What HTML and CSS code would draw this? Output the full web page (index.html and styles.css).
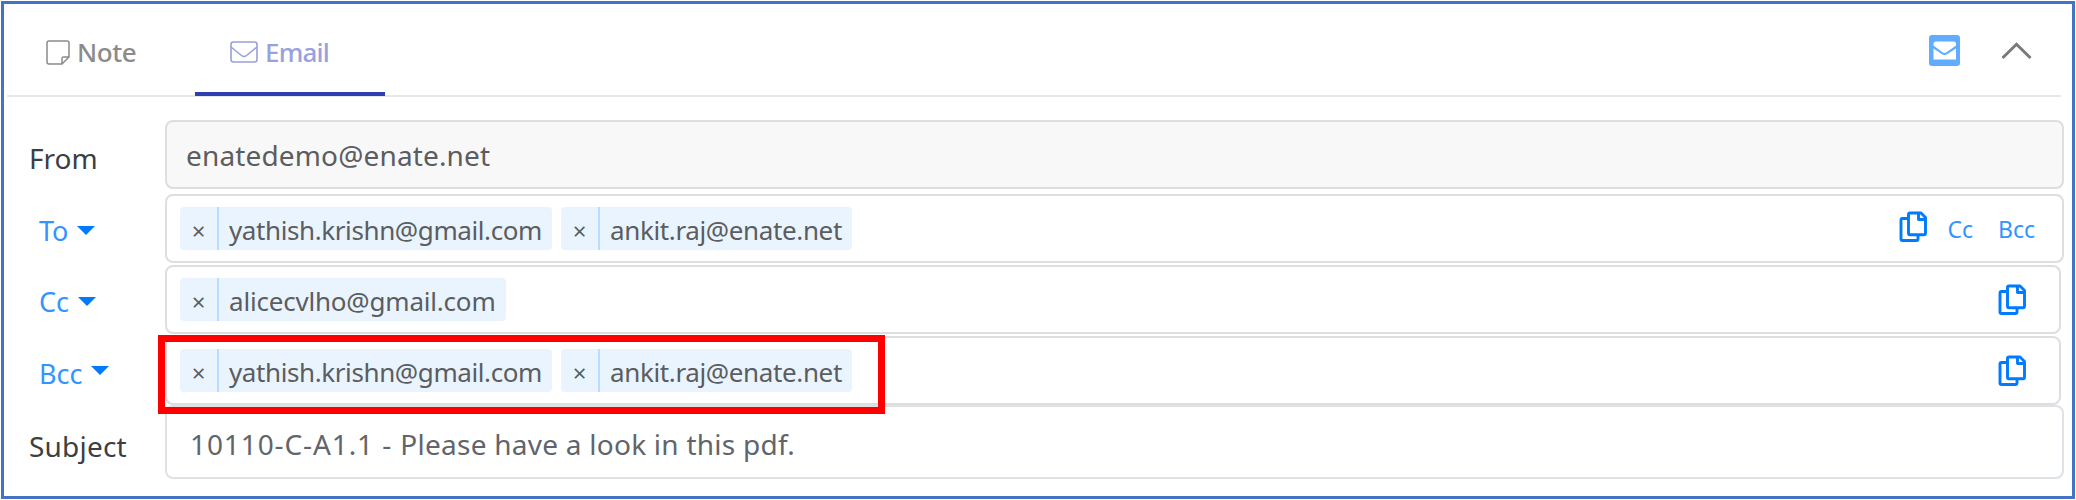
FILE: index.html
```html
<!DOCTYPE html>
<html lang="en">
<head>
<meta charset="utf-8">
<title>Email</title>
<link rel="stylesheet" href="styles.css">
</head>
<body>
<svg width="0" height="0" class="defs">
  <symbol id="copy" viewBox="0 0 28 32">
    <path d="M9 7.500H3.500Q2 7.500 2 9V28Q2 29.500 3.500 29.500H17.500Q19 29.500 19 28V24.500M11 2H22L26.500 6.500V22Q26.500 23.800 25 23.800H11Q9.500 23.800 9.500 22V3.500Q9.500 2 11 2ZM19.500 2V8.500H26.500" fill="none" stroke="currentColor" stroke-width="2.900" stroke-linejoin="round"/>
  </symbol>
</svg>
<main class="panel">
  <header class="tabs">
    <div class="tab note">
      <svg width="24" height="25" viewBox="0 0 24 25"><path d="M3 1H21Q23 1 23 3V17L16 24H3Q1 24 1 22V3Q1 1 3 1ZM23 17H17.500Q16 17 16 18.500V24" fill="none" stroke="currentColor" stroke-width="1.500"/></svg>
      <span>Note</span>
    </div>
    <div class="tab email">
      <svg width="28" height="22" viewBox="0 0 28 22"><rect x="1" y="1" width="26" height="20" rx="2.500" fill="none" stroke="currentColor" stroke-width="1.600"/><path d="M1 6L11.500 14.500Q14 16.500 16.500 14.500L27 6" fill="none" stroke="currentColor" stroke-width="1.600"/></svg>
      <span>Email</span>
    </div>
    <div class="tools">
      <svg width="31" height="31" viewBox="0 0 31 31"><rect width="31" height="31" rx="3" fill="#60adff"/><path d="M7 6.500H24.500Q27 6.500 27 9V10.500L17.500 17.300Q15.500 18.600 13.500 17.300L4.500 10.500V9Q4.500 6.500 7 6.500ZM4.500 13.500L12.500 19Q15.500 21 18.500 19L27 13.500V24.500H4.500Z" fill="#fff"/></svg>
      <svg width="31" height="18" viewBox="0 0 31 18"><path d="M1.500 16L15.500 2.300L29.500 16" fill="none" stroke="#77797c" stroke-width="3"/></svg>
    </div>
  </header>
  <section class="form">
    <div class="row from">
      <div class="label">From</div>
      <div class="field"><span class="value">enatedemo@enate.net</span></div>
    </div>
    <div class="row to">
      <div class="label link"><span>To</span><i class="caret"></i></div>
      <div class="field">
        <div class="chip"><span class="x">×</span><span class="mail m1">yathish.krishn@gmail.com</span></div>
        <div class="chip"><span class="x">×</span><span class="mail m2">ankit.raj@enate.net</span></div>
        <div class="actions"><svg class="copy"><use href="#copy"/></svg><span class="acc">Cc</span><span class="abcc">Bcc</span></div>
      </div>
    </div>
    <div class="row cc">
      <div class="label link"><span>Cc</span><i class="caret"></i></div>
      <div class="field">
        <div class="chip"><span class="x">×</span><span class="mail m3">alicecvlho@gmail.com</span></div>
        <div class="actions"><svg class="copy"><use href="#copy"/></svg></div>
      </div>
    </div>
    <div class="row bcc">
      <div class="label link"><span>Bcc</span><i class="caret"></i></div>
      <div class="field">
        <div class="chip"><span class="x">×</span><span class="mail m1">yathish.krishn@gmail.com</span></div>
        <div class="chip"><span class="x">×</span><span class="mail m2">ankit.raj@enate.net</span></div>
        <div class="actions"><svg class="copy"><use href="#copy"/></svg></div>
      </div>
      <div class="highlight"></div>
    </div>
    <div class="row subject">
      <div class="label">Subject</div>
      <div class="field"><span class="value"><span class="ref">10110-C-A1.1 - </span>Please have a look in this pdf.</span></div>
    </div>
  </section>
</main>
</body>
</html>
```
FILE: styles.css
```css
* { box-sizing: border-box; }
body { margin: 0; padding: 1px; background: #fff; font-family: "Noto Sans", "Open Sans", sans-serif; }
svg { display: block; flex: none; }
.defs { position: absolute; }
.panel { width: 2074px; height: 498px; border: 3px solid #4472c4; }
.tabs { display: flex; height: 93px; margin: 0 11px 0 3px; border-bottom: 2px solid #e8e8e8; }
.tab { display: flex; align-items: center; height: 92px; padding-top: 4px; font-size: 26px; font-weight: 500; letter-spacing: -.4px; white-space: nowrap; }
.note { width: 188px; padding-left: 39px; gap: 7px; color: #8b8b8b; }
.email { width: 190px; padding-left: 35px; padding-top: 8px; gap: 7px; letter-spacing: -.8px; color: #98a1dc; border-bottom: 4px solid #303fae; }
.tab span { line-height: 36px; }
.tools { display: flex; align-items: center; margin-left: auto; gap: 41px; padding: 0 29px 0 0; height: 93px; }
.form { display: grid; padding-top: 23px; }
.row { position: relative; display: flex; height: 69px; }
.label { width: 161px; padding-left: 25px; padding-top: 7px; display: flex; align-items: center; font-size: 28px; color: #3b3f44; white-space: nowrap; }
.link { padding-left: 35px; padding-top: 4px; font-size: 27px; gap: 9px; color: #3394ff; }
.caret { width: 0; height: 0; border: 9px solid transparent; border-top-color: #007bff; border-bottom: 0; }
.field { display: flex; align-items: center; width: 1899px; height: 69px; border: 2px solid #dedede; border-radius: 8px; background: #fff; padding-left: 13px; gap: 9px; font-size: 26px; color: #5b5d60; white-space: nowrap; }
.from .field { background: #f8f8f8; padding-left: 19px; font-size: 28px; letter-spacing: .15px; }
.to { margin-top: 5px; }
.cc { margin-top: 2px; }
.bcc { margin-top: 2px; }
.cc .field, .bcc .field { width: 1896px; }
.bcc .label { padding-top: 5px; }
.bcc .caret { margin-top: -6px; }
.subject { height: 74px; }
.subject .field { height: 74px; border-color: #dee2e6; padding: 3px 0 0 23px; font-size: 28px; letter-spacing: .25px; color: #61656b; }
.subject .label { letter-spacing: .2px; }
.ref { letter-spacing: .9px; }
.chip { display: flex; height: 43px; background: #e9f4ff; border-radius: 4px; align-items: center; }
.x { width: 39px; height: 43px; border-right: 2px solid #b9dcff; text-align: center; font-size: 24px; line-height: 47px; }
.mail { padding-left: 10px; line-height: 43px; padding-top: 3px; }
.m1 { width: 333px; letter-spacing: -.4px; }
.m2 { width: 252px; letter-spacing: -.37px; }
.m3 { width: 287px; letter-spacing: -.2px; }
.actions { display: flex; align-items: center; margin-left: auto; color: #007bff; font-size: 23px; height: 65px; padding-right: 33px; }
.to .actions { padding-right: 27px; }
.to .copy { margin-top: -3px; }
.copy { width: 28px; height: 32px; }
.acc { margin-left: 20px; }
.abcc { margin-left: 25px; }
.acc, .abcc { color: #3394ff; padding-top: 1px; }
.highlight { position: absolute; left: 154px; top: -1px; width: 727px; height: 79px; border: 7px solid #f00; z-index: 2; }
```
